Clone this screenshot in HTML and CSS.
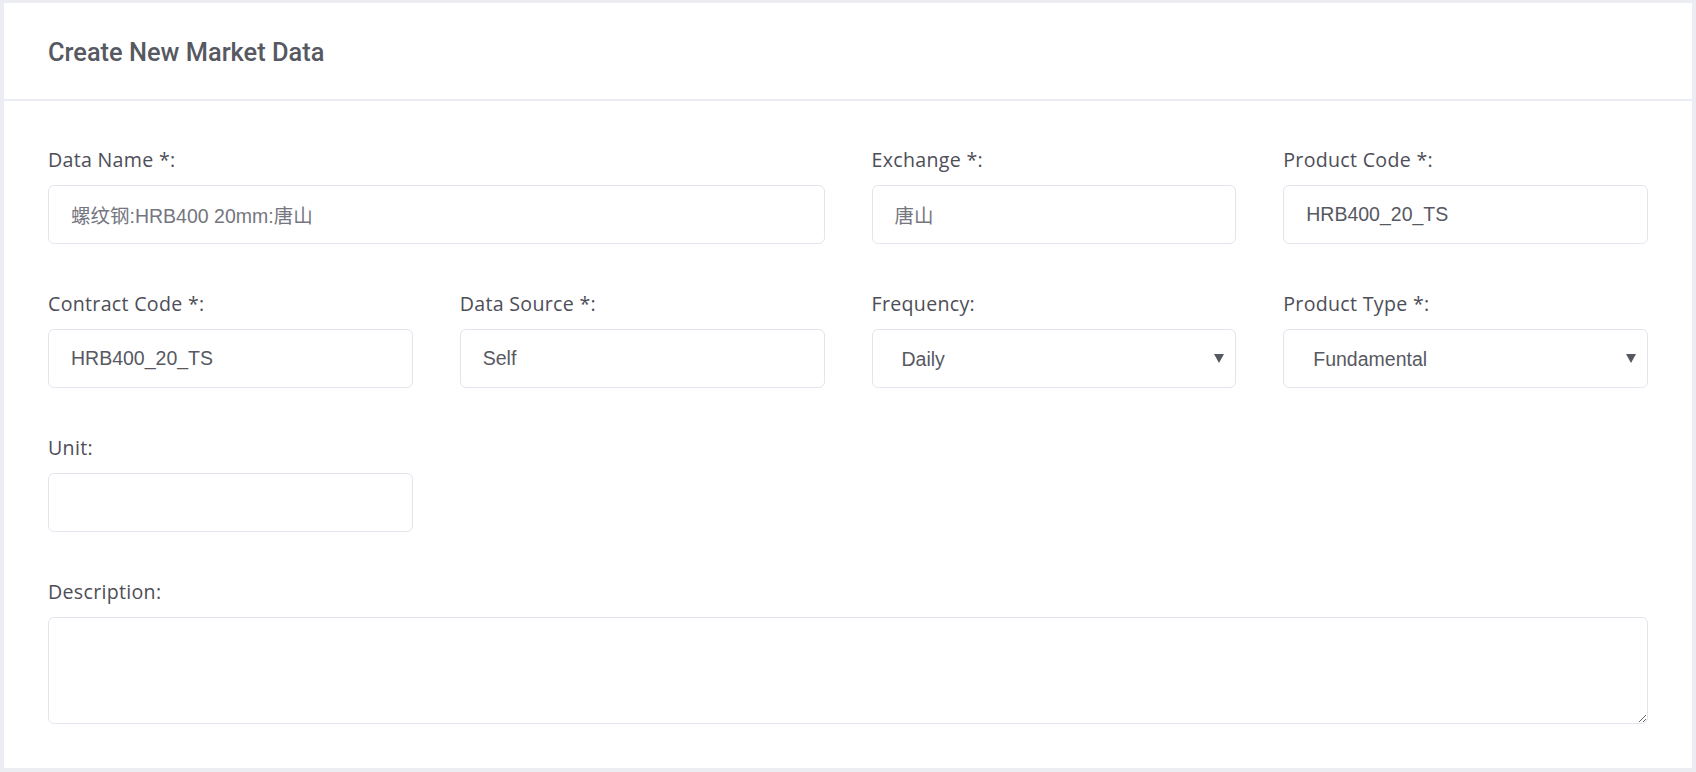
FILE: index.html
```html
<!DOCTYPE html>
<html>
<head>
<meta charset="utf-8">
<title>Create New Market Data</title>
<link rel="stylesheet" href="styles.css">
</head>
<body>
<div class="card">
  <div class="card-head">
    <h3 class="card-title">Create New Market Data</h3>
  </div>
  <form class="card-body">
    <div class="grid">
      <div class="group span2">
        <label class="label">Data Name *:</label>
        <input class="control muted" type="text" value="螺纹钢:HRB400 20mm:唐山">
      </div>
      <div class="group">
        <label class="label">Exchange *:</label>
        <input class="control muted" type="text" value="唐山">
      </div>
      <div class="group">
        <label class="label">Product Code *:</label>
        <input class="control" type="text" value="HRB400_20_TS">
      </div>

      <div class="group">
        <label class="label">Contract Code *:</label>
        <input class="control" type="text" value="HRB400_20_TS">
      </div>
      <div class="group">
        <label class="label">Data Source *:</label>
        <input class="control" type="text" value="Self">
      </div>
      <div class="group">
        <label class="label">Frequency:</label>
        <div class="select-wrap">
          <select class="control select">
            <option>Daily</option>
            <option>Weekly</option>
            <option>Monthly</option>
          </select>
        </div>
      </div>
      <div class="group">
        <label class="label">Product Type *:</label>
        <div class="select-wrap">
          <select class="control select">
            <option>Fundamental</option>
            <option>Futures</option>
          </select>
        </div>
      </div>

      <div class="group">
        <label class="label">Unit:</label>
        <input class="control" type="text" value="">
      </div>

      <div class="group span4">
        <label class="label">Description:</label>
        <textarea class="control area"></textarea>
      </div>
    </div>
  </form>
</div>
</body>
</html>
```

FILE: styles.css
```css
html, body {
  margin: 0;
  padding: 0;
}

body {
  background: #ecedf3;
  font-family: "Open Sans", "Noto Sans", sans-serif;
  padding: 3px 4px 4px 4px;
  box-sizing: border-box;
  height: 772px;
  overflow: hidden;
}

.card {
  background: #ffffff;
}

.card-head {
  height: 96px;
  border-bottom: 2px solid #ebedf2;
  display: flex;
  align-items: center;
  padding: 0 44px;
}

.card-title {
  margin: 0;
  font-family: Roboto, "Liberation Sans", sans-serif;
  font-weight: 500;
  font-size: 25.4px;
  color: #575962;
  padding-top: 2px;
}

.card-body {
  margin: 0;
  padding: 44px 44px 44.5px 44px;
}

.grid {
  display: grid;
  grid-template-columns: repeat(4, 1fr);
  column-gap: 47px;
  row-gap: 45px;
}

.span2 {
  grid-column: span 2;
}

.span4 {
  grid-column: span 4;
}

.group {
  display: flex;
  flex-direction: column;
}

.label {
  display: block;
  font-family: "Open Sans", "Noto Sans", sans-serif;
  font-size: 19.6px;
  line-height: 30px;
  color: #4d4e58;
  margin-bottom: 10px;
  letter-spacing: 0.3px;
}

.control {
  box-sizing: border-box;
  width: 100%;
  height: 59px;
  margin: 0;
  border: 1px solid #e2e5ec;
  border-radius: 6px;
  background: #ffffff;
  padding: 0 22px;
  font-family: "Liberation Sans", Arial, "Noto Sans CJK SC", sans-serif;
  font-size: 19.5px;
  color: #575962;
  outline: none;
}

.muted {
  color: #75767f;
}

.select-wrap {
  position: relative;
}

.select {
  appearance: none;
  -webkit-appearance: none;
  padding-left: 29px;
  padding-right: 40px;
}

.select-wrap::after {
  content: "";
  position: absolute;
  right: 12px;
  top: 25px;
  width: 0;
  height: 0;
  border-left: 5px solid transparent;
  border-right: 5px solid transparent;
  border-top: 9px solid #555860;
  pointer-events: none;
}

.area {
  height: 106.5px;
  padding: 14px 22px;
  resize: vertical;
}
```
